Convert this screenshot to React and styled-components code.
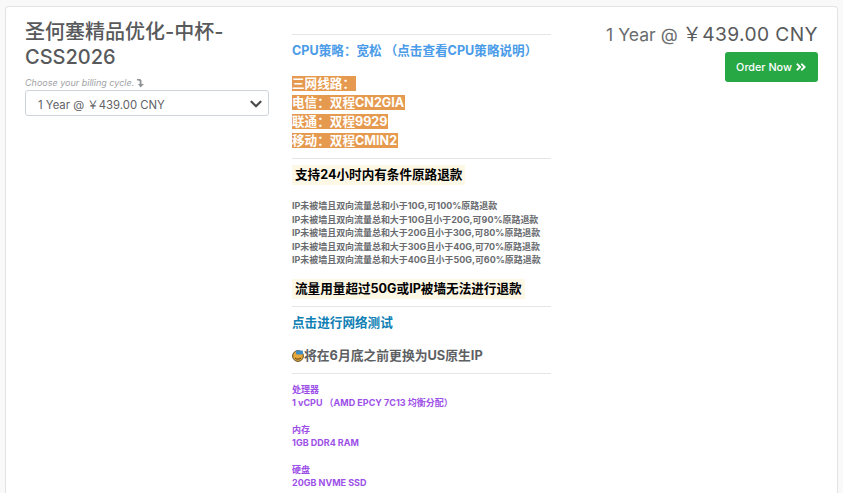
import styled, { createGlobalStyle } from "styled-components";
import { FaAngleDoubleRight } from "react-icons/fa";
import { FiChevronDown } from "react-icons/fi";

const refundRows = [
  "IP未被墙且双向流量总和小于10G,可100%原路退款",
  "IP未被墙且双向流量总和大于10G且小于20G,可90%原路退款",
  "IP未被墙且双向流量总和大于20G且小于30G,可80%原路退款",
  "IP未被墙且双向流量总和大于30G且小于40G,可70%原路退款",
  "IP未被墙且双向流量总和大于40G且小于50G,可60%原路退款"
];

const lines = ["三网线路：", "电信：双程CN2GIA", "联通：双程9929", "移动：双程CMIN2"];

const specs = [
  { label: "处理器", value: "1 vCPU （AMD EPCY 7C13 均衡分配）" },
  { label: "内存", value: "1GB DDR4 RAM" },
  { label: "硬盘", value: "20GB NVME SSD" }
];

export default function App() {
  return (
    <>
      <GlobalStyle />
      <Card>
        <LeftColumn>
          <ProductTitle>圣何塞精品优化-中杯-CSS2026</ProductTitle>
          <CycleHint>
            Choose your billing cycle.
            <svg width="9" height="10" viewBox="0 0 9 10">
              <path d="M1 1h3.2l1.3 1.4V6H8L4.6 9.6 2 6h1.7V3.2L2.6 2.6H1z" fill="#8f9296" />
            </svg>
          </CycleHint>
          <SelectBox>
            1 Year @ ￥439.00 CNY
            <FiChevronDown />
          </SelectBox>
        </LeftColumn>

        <MiddleColumn>
          <Rule />
          <PolicyLink>CPU策略：宽松 （点击查看CPU策略说明）</PolicyLink>
          <LineList>
            {lines.map(line => (
              <div key={line}>
                <LineText>{line}</LineText>
              </div>
            ))}
          </LineList>
          <Rule />
          <Notice>支持24小时内有条件原路退款</Notice>
          <RefundList>
            {refundRows.map(row => (
              <div key={row}>{row}</div>
            ))}
          </RefundList>
          <Notice>流量用量超过50G或IP被墙无法进行退款</Notice>
          <NoticeRule />
          <TestLink>点击进行网络测试</TestLink>
          <UpdateNote>
            <svg width="12" height="13" viewBox="0 0 12 13">
              <circle cx="6" cy="7" r="5.4" fill="#e8a93a" stroke="#5e4f28" strokeWidth="1" />
              <rect x="4" y="1.5" width="7" height="4" rx="1" fill="#3f8fc4" />
              <path d="M3 9c1.5 1.5 4 1.5 6 0" stroke="#4a3a1a" strokeWidth="1" fill="none" />
            </svg>
            将在6月底之前更换为US原生IP
          </UpdateNote>
          <Rule />
          <SpecList>
            {specs.map(spec => (
              <Spec key={spec.label}>
                <div>{spec.label}</div>
                <div>{spec.value}</div>
              </Spec>
            ))}
          </SpecList>
        </MiddleColumn>

        <RightColumn>
          <PriceLine>
            1 Year @ <strong>￥439.00 CNY</strong>
          </PriceLine>
          <OrderButton>
            Order Now <FaAngleDoubleRight />
          </OrderButton>
        </RightColumn>
      </Card>
    </>
  );
}

const GlobalStyle = createGlobalStyle`
  html, body {
    margin: 0;
    height: 493px;
    overflow: hidden;
    background: #f9f9f9;
  }
  body {
    padding: 6px 5px 0;
    box-sizing: border-box;
    font-family: Inter, "Noto Sans CJK SC", sans-serif;
    color: #58595b;
  }
`;

const Card = styled.div`
  display: grid;
  grid-template-columns: 244px 259px 1fr;
  column-gap: 23px;
  height: 480px;
  padding: 13px 19px 0;
  background: #fff;
  border: 1px solid #e3e3e3;
  border-bottom: 0;
  border-radius: 4px 4px 0 0;
`;

const LeftColumn = styled.div`
  display: flex;
  flex-direction: column;
  align-items: stretch;
`;

const ProductTitle = styled.h2`
  margin: 0;
  font-size: 20px;
  line-height: 25px;
  font-weight: 500;
  color: #58595b;
`;

const CycleHint = styled.div`
  display: flex;
  align-items: center;
  gap: 2px;
  margin-top: 6px;
  font-size: 9px;
  line-height: 14px;
  font-style: italic;
  color: #a0a2a6;
`;

const SelectBox = styled.div`
  display: flex;
  align-items: center;
  justify-content: space-between;
  height: 26px;
  box-sizing: border-box;
  padding: 1px 3px 0 12px;
  border: 1px solid #ced4da;
  border-radius: 3px;
  font-size: 11.35px;
  color: #5f6266;

  svg {
    width: 18px;
    height: 18px;
    stroke-width: 3;
    color: #4a4d50;
  }
`;

const MiddleColumn = styled.div`
  display: flex;
  flex-direction: column;
  align-items: flex-start;
  padding-top: 14px;
`;

const Rule = styled.hr`
  align-self: stretch;
  margin: 0;
  border: 0;
  border-top: 1px solid #e5e5e5;
`;

const NoticeRule = styled(Rule)`
  margin-top: 7px;
`;

const PolicyLink = styled.a`
  margin-top: 8px;
  font-size: 12.6px;
  line-height: 16px;
  font-weight: 700;
  color: #4a9be8;
`;

const LineList = styled.div`
  margin-top: 15px;
  margin-bottom: 8px;
  font-size: 12.6px;
  line-height: 19px;
  font-weight: 700;
`;

const LineText = styled.span`
  display: inline-block;
  line-height: 15px;
  padding-right: 1px;
  background: #e59a4f;
  color: #fff;
`;

const Notice = styled.div`
  margin-top: 6px;
  padding: 0 3px;
  font-size: 12.6px;
  line-height: 20px;
  font-weight: 700;
  color: #000;
  background: #fdf7e6;
`;

const RefundList = styled.div`
  margin-top: 14px;
  margin-bottom: 6px;
  font-size: 8.96px;
  line-height: 13.6px;
  font-weight: 700;
  color: #6a6c70;
  white-space: nowrap;
`;

const TestLink = styled.a`
  margin-top: 8px;
  font-size: 12.6px;
  line-height: 16px;
  font-weight: 700;
  color: #0f7fb5;
`;

const UpdateNote = styled.div`
  display: flex;
  align-items: center;
  margin-top: 16px;
  margin-bottom: 8px;
  font-size: 12.8px;
  line-height: 18px;
  font-weight: 700;
  color: #5d5f63;
`;

const SpecList = styled.div`
  display: flex;
  flex-direction: column;
  gap: 14px;
  margin-top: 9px;
`;

const Spec = styled.div`
  font-size: 9px;
  line-height: 13px;
  font-weight: 700;
  color: #9d50e8;
`;

const RightColumn = styled.div`
  display: flex;
  flex-direction: column;
  align-items: flex-end;
`;

const PriceLine = styled.div`
  margin-top: 3px;
  font-size: 17.6px;
  line-height: 22px;
  font-weight: 400;
  color: #6a6c70;
  white-space: nowrap;

  strong {
    font-size: 19.2px;
    font-weight: 400;
    color: #58595b;
    letter-spacing: 0.4px;
  }
`;

const OrderButton = styled.button`
  display: flex;
  align-items: center;
  justify-content: center;
  gap: 3px;
  width: 93px;
  height: 30px;
  margin-top: 6px;
  padding: 0;
  border: 0;
  border-radius: 3px;
  background: #28a745;
  color: #fff;
  font: 500 10.8px Inter, sans-serif;

  svg {
    width: 12px;
    height: 12px;
  }
`;
